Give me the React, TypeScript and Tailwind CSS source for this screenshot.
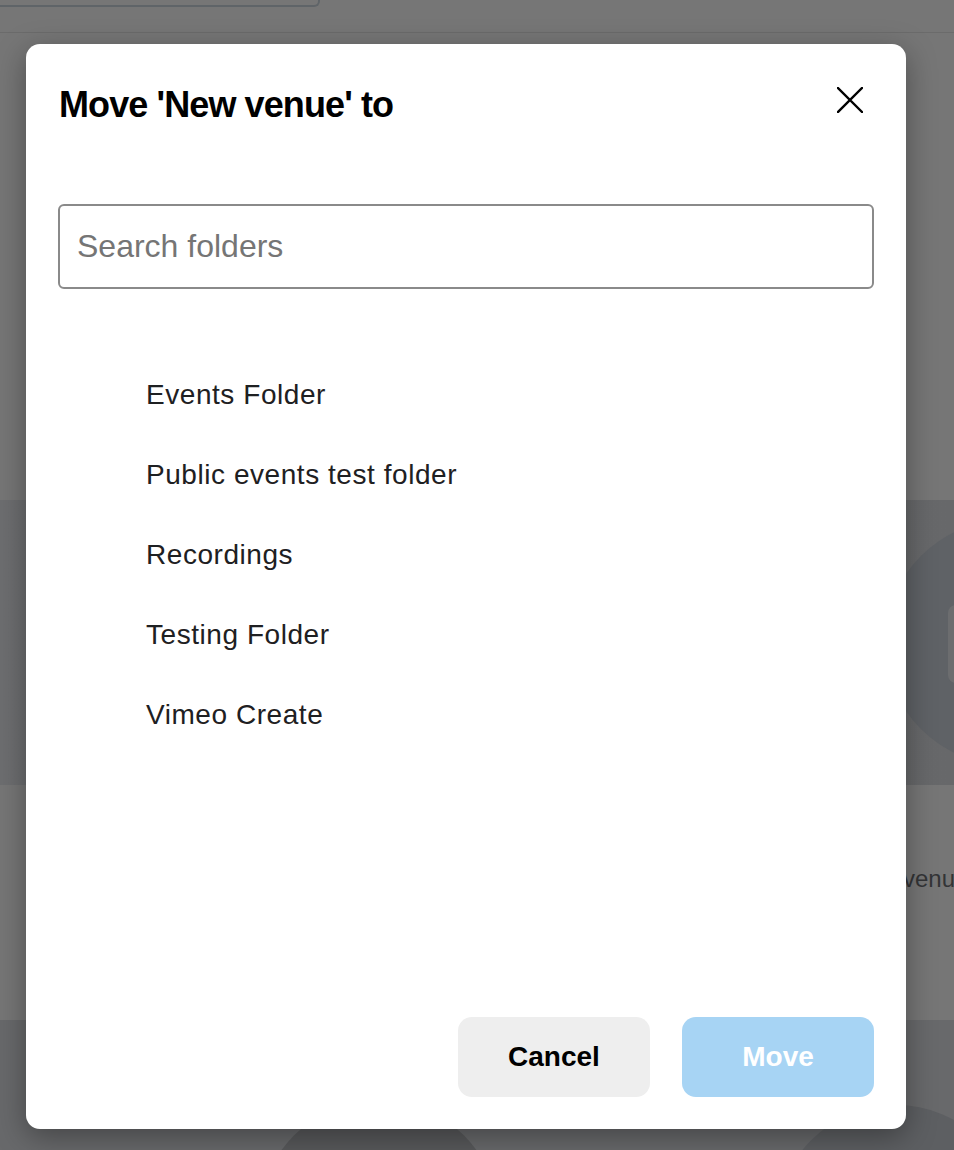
const folders = [
  "Events Folder",
  "Public events test folder",
  "Recordings",
  "Testing Folder",
  "Vimeo Create",
];

function BackgroundPage() {
  return (
    <div className="flex h-[1150px] w-full flex-col overflow-hidden bg-[#767676] font-['Liberation_Sans',Arial,sans-serif]">
      <div className="h-[33px] shrink-0 border-b border-[#6b6b6b]">
        <div className="h-[7px] w-[320px] rounded-br-[6px] border-r-2 border-b-2 border-[#5f6468]" />
      </div>
      <div className="h-[467px] shrink-0" />
      <div className="flex h-[285px] shrink-0 justify-end overflow-hidden bg-gradient-to-r from-[#6d6e70] to-[#67686a] pt-[20px]">
        <div className="mr-[-176px] h-[245px] w-[245px] shrink-0 rounded-full bg-[#5f6266] pt-[85px] pl-[63px]">
          <div className="h-[78px] w-[40px] rounded-[8px] bg-[#6c6d6f]" />
        </div>
      </div>
      <div className="h-[235px] shrink-0 overflow-hidden pt-[82px] pl-[903px]">
        <p className="whitespace-nowrap text-[24px] leading-none text-[#333436]">venue</p>
      </div>
      <div className="flex h-[130px] shrink-0 bg-[#68696b]">
        <div className="mt-[105px] ml-[122px] h-[60px] w-[57px] bg-[#707172]" />
        <div className="mt-[80px] ml-[137px] h-[240px] w-[240px] shrink-0 rounded-full bg-[#58595b] pt-[50px] pl-[61px]">
          <div className="h-[60px] w-[60px] border-[6px] border-[#77787a]" />
        </div>
        <div className="mt-[105px] ml-[140px] h-[60px] w-[58px] bg-[#707172]" />
        <div className="mt-[85px] ml-[137px] h-[240px] w-[240px] shrink-0 rounded-full bg-[#5d5f62]" />
      </div>
    </div>
  );
}

function CloseIcon() {
  return (
    <svg width="26" height="26" viewBox="0 0 26 26" fill="none">
      <path d="M1 1L25 25M25 1L1 25" stroke="black" strokeWidth="2.4" strokeLinecap="square" />
    </svg>
  );
}

function MoveDialog() {
  return (
    <div className="absolute inset-0 pt-[44px] pl-[26px] font-['Liberation_Sans',Arial,sans-serif]">
      <div className="flex h-[1085px] w-[880px] flex-col rounded-[14px] bg-white px-[32px] pb-[32px] shadow-[0_8px_30px_rgba(0,0,0,0.35)]">
        <div className="flex h-[39px] items-start justify-between pt-0 pl-[1px] mt-[40px]">
          <h2 className="mt-[3px] text-[36px] leading-none font-bold tracking-[-0.9px] text-black">
            Move 'New venue' to
          </h2>
          <button className="mr-[11px] mt-[3px] flex h-[26px] w-[26px] items-center justify-center">
            <CloseIcon />
          </button>
        </div>

        <input
          type="text"
          placeholder="Search folders"
          className="mt-[81px] h-[85px] w-full rounded-[6px] border-2 border-[#8a8a8a] pl-[17px] text-[32px] text-black outline-none placeholder:text-[#757575]"
        />

        <ul className="mt-[66px] flex flex-col">
          {folders.map((name) => (
            <li
              key={name}
              className="flex h-[80px] items-center pl-[88px] text-[28px] tracking-[0.55px] text-[#1e2022]"
            >
              {name}
            </li>
          ))}
        </ul>

        <div className="mt-auto flex justify-end gap-[32px]">
          <button className="h-[80px] w-[192px] rounded-[14px] bg-[#eeeeee] text-[28px] font-bold text-black">
            Cancel
          </button>
          <button className="h-[80px] w-[192px] rounded-[14px] bg-[#a7d4f4] text-[28px] font-bold text-white">
            Move
          </button>
        </div>
      </div>
    </div>
  );
}

export default function App() {
  return (
    <div className="relative h-[1150px] w-full overflow-hidden">
      <BackgroundPage />
      <MoveDialog />
    </div>
  );
}
